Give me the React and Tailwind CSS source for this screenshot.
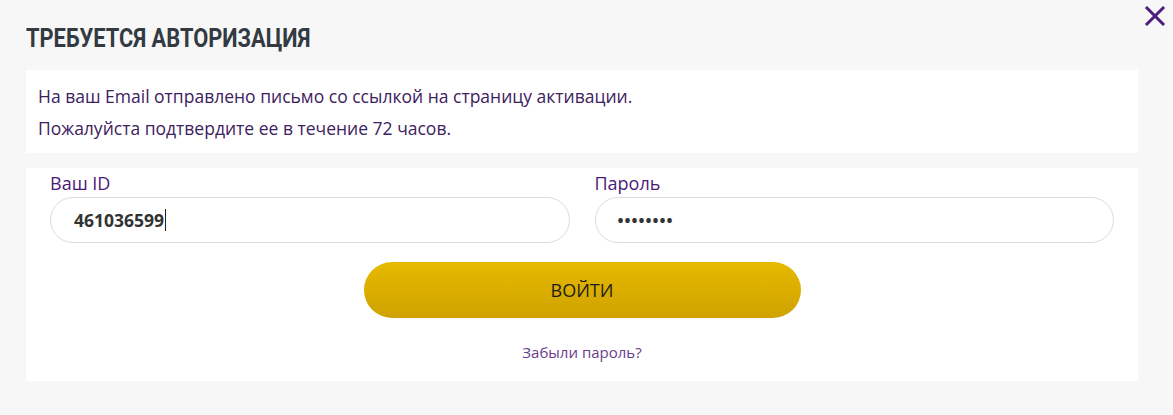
export default function App() {
	return (
		<div className="relative h-[415px] w-full bg-[#f7f7f7] pl-[26px] pr-[35px] pt-[25px]" style={{ fontFamily: '"Open Sans", sans-serif' }}>
			{/* close */}
			<button className="absolute right-[7px] top-[5px] h-[22px] w-[22px]" aria-label="close">
				<svg viewBox="0 0 22 22" className="h-[22px] w-[22px]">
					<path d="M3 3 L19 19 M19 3 L3 19" stroke="#4b1d7e" strokeWidth="3" strokeLinecap="square" />
				</svg>
			</button>

			<h2
				className="origin-left scale-x-[0.84] whitespace-nowrap text-[26px] font-bold uppercase leading-[26px] text-[#333a42]"
				style={{ fontFamily: 'Roboto, sans-serif' }}
			>
				Требуется авторизация
			</h2>

			<div className="mt-[19px] bg-white pb-[13px] pl-[12px] pt-[14px] text-[17.5px] leading-[24px] text-[#3d2160]">
				<p>На ваш Email отправлено письмо со ссылкой на страницу активации.</p>
				<p className="mt-[8px]">Пожалуйста подтвердите ее в течение 72 часов.</p>
			</div>

			<div className="mt-[15px] bg-white px-[24px] pb-[19px] pt-[4px]">
				<div className="grid grid-cols-2 gap-[25px]">
					<label className="block">
						<span className="mb-[3px] block text-[18px] leading-[22px] text-[#4a1a78]">Ваш ID</span>
						<div className="flex h-[46px] items-center rounded-full border border-[#dcdcdc] pl-[23px] text-[17.5px] font-bold text-[#333]">
							461036599<span className="ml-[1px] inline-block h-[22px] w-[1px] bg-[#222]" />
						</div>
					</label>
					<label className="block">
						<span className="mb-[3px] block text-[18px] leading-[22px] text-[#4a1a78]">Пароль</span>
						<div className="flex h-[46px] items-center rounded-full border border-[#dcdcdc] pl-[22px] text-[16px] font-bold tracking-[1px] text-[#333]">
							••••••••
						</div>
					</label>
				</div>

				<div className="mt-[19px] flex justify-center">
					<button className="h-[56px] w-[437px] rounded-full bg-gradient-to-b from-[#e6b900] to-[#cfa200] text-[18px] text-[#1c1c1c]">
						ВОЙТИ
					</button>
				</div>

				<div className="mt-[24px] text-center text-[15px] leading-[20px]">
					<a className="text-[#6a3d8e]" href="#">Забыли пароль?</a>
				</div>
			</div>
		</div>
	);
}
